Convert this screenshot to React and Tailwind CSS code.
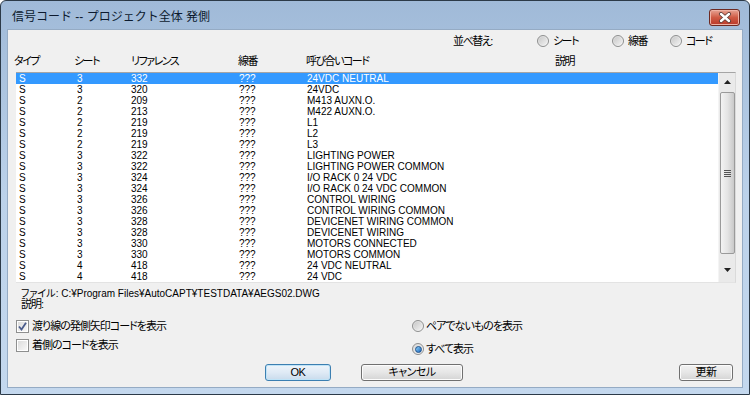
import React from "react";

const rows = [
  ["S", "3", "332", "???", "24VDC NEUTRAL"],
  ["S", "3", "320", "???", "24VDC"],
  ["S", "2", "209", "???", "M413 AUXN.O."],
  ["S", "2", "213", "???", "M422 AUXN.O."],
  ["S", "2", "219", "???", "L1"],
  ["S", "2", "219", "???", "L2"],
  ["S", "2", "219", "???", "L3"],
  ["S", "3", "322", "???", "LIGHTING POWER"],
  ["S", "3", "322", "???", "LIGHTING POWER COMMON"],
  ["S", "3", "324", "???", "I/O RACK 0 24 VDC"],
  ["S", "3", "324", "???", "I/O RACK 0 24 VDC COMMON"],
  ["S", "3", "326", "???", "CONTROL WIRING"],
  ["S", "3", "326", "???", "CONTROL WIRING COMMON"],
  ["S", "3", "328", "???", "DEVICENET WIRING COMMON"],
  ["S", "3", "328", "???", "DEVICENET WIRING"],
  ["S", "3", "330", "???", "MOTORS CONNECTED"],
  ["S", "3", "330", "???", "MOTORS COMMON"],
  ["S", "4", "418", "???", "24 VDC NEUTRAL"],
  ["S", "4", "418", "???", "24 VDC"],
];

function Radio({ checked }) {
  return (
    <span className="w-[12px] h-[12px] shrink-0 rounded-full border border-[#8e8f8f] bg-linear-to-br from-[#d6d6d6] to-[#fafafa] flex items-center justify-center">
      {checked ? (
        <span className="w-[7px] h-[7px] rounded-full border border-[#1c4f8a] bg-linear-to-br from-[#8fd3fb] to-[#1464b8]" />
      ) : (
        <span className="w-[8px] h-[8px] rounded-full bg-linear-to-br from-[#c9c9c9] to-[#f1f1f1]" />
      )}
    </span>
  );
}

function Check({ checked }) {
  return (
    <span className="w-[13px] h-[13px] shrink-0 border border-[#8e8f8f] bg-white flex items-center justify-center">
      <span className="w-[9px] h-[9px] bg-linear-to-br from-[#dcdcdc] to-[#f7f7f7] flex items-center justify-center">
        {checked && (
          <svg width="9" height="9" viewBox="0 0 9 9">
            <path d="M1 4.5 L3.5 7.5 L8 0.8" fill="none" stroke="#4a5c8c" strokeWidth="1.8" />
          </svg>
        )}
      </span>
    </span>
  );
}

const btnBase =
  "h-[17px] shrink-0 rounded-[3px] border flex items-center justify-center text-[11px] tracking-[-0.5px] text-black ";
const btnNormal =
  "border-[#707070] bg-linear-to-b from-[#f2f2f2] via-[#e6e6e6] to-[#d4d4d4] shadow-[inset_0_0_0_1px_#fcfcfc]";
const btnDefault =
  "border-[#3c7fb1] bg-linear-to-b from-[#eef5fb] via-[#dfeaf5] to-[#c9dbec] shadow-[inset_0_0_0_1px_#bfe3f7]";

export default function App() {
  return (
    <div className="w-[750px] h-[395px] font-['Liberation_Sans','Noto_Sans_CJK_JP',sans-serif] [font-feature-settings:'palt'] text-black">
      <div className="w-[750px] h-[395px] rounded-t-[6px] border border-[#2c3a48] bg-linear-to-b from-[#a0bad8] via-[#bcd2ea] to-[#c4d8ee] flex flex-col">
        {/* Title bar */}
        <div className="h-[28px] flex items-center pl-[11px] pr-[9px]">
          <div className="text-[12px] text-[#0c1a2e] pt-[3px] [font-feature-settings:normal]">信号コード -- プロジェクト全体 発側</div>
          <div className="ml-auto mt-[4px] w-[31px] h-[17px] rounded-[3px] border border-[#6e2a22] bg-linear-to-b from-[#e6a394] via-[#cf5a44] to-[#b9382a] flex items-center justify-center shadow-[inset_0_0_0_1px_#efb2a5]">
            <svg width="14" height="11" viewBox="0 0 14 11">
              <path d="M3 2 L11 9 M11 2 L3 9" stroke="#5a3a36" strokeWidth="4" strokeLinecap="round" />
              <path d="M3 2 L11 9 M11 2 L3 9" stroke="#ffffff" strokeWidth="2.4" strokeLinecap="round" />
            </svg>
          </div>
        </div>
        {/* Client area */}
        <div className="mx-[6px] h-[359px] border border-[#95abc4] bg-[#f0f0f0] flex flex-col pl-[8px] pr-[5px] text-[10px]">
          {/* Sort row */}
          <div className="mt-[5px] h-[12px] flex items-center text-[11px] tracking-[-1.5px]">
            <div className="ml-[437px] w-[84px]">並べ替え:</div>
            <div className="w-[75px] flex items-center gap-[4px]"><Radio />シート</div>
            <div className="w-[58px] flex items-center gap-[4px]"><Radio />線番</div>
            <div className="flex items-center gap-[4px]"><Radio />コード</div>
          </div>
          {/* Header */}
          <div className="mt-[8px] h-[12px] flex items-center text-[11px] tracking-[-1.5px] ml-[-2px]">
            <div className="w-[60px]">タイプ</div>
            <div className="w-[57px]">シート</div>
            <div className="w-[107px]">リファレンス</div>
            <div className="w-[68px]">線番</div>
            <div className="w-[249px]">呼び合いコード</div>
            <div>説明</div>
          </div>
          {/* List */}
          <div className="mt-[5px] w-[720px] h-[211px] bg-white border-t border-t-[#a5a5a5] border-r border-r-[#dadada] border-b border-b-[#e3e3e3] flex">
            <div className="flex-1 flex flex-col">
              {rows.map((r, i) => (
                <div
                  key={i}
                  className={
                    "h-[11px] flex items-center pl-[3px] leading-none " +
                    (i === 0 ? "bg-[#3399ff] text-white" : "text-black")
                  }
                >
                  <div className="w-[58px]">{r[0]}</div>
                  <div className="w-[54px]">{r[1]}</div>
                  <div className="w-[108px]">{r[2]}</div>
                  <div className="w-[68px]">{r[3]}</div>
                  <div>{r[4]}</div>
                </div>
              ))}
            </div>
            {/* Scrollbar */}
            <div className="w-[17px] bg-[#eaeaea] flex flex-col items-center border-l border-l-[#f4f4f4]">
              <div className="h-[17px] w-full flex items-center justify-center">
                <svg width="7" height="4" viewBox="0 0 7 4"><path d="M0 4 L3.5 0 L7 4 Z" fill="#222" /></svg>
              </div>
              <div className="mt-[2px] w-[15px] h-[162px] rounded-[2px] border border-[#9a9a9a] bg-linear-to-r from-[#f3f3f3] via-[#e4e4e4] to-[#c9c9c9] flex items-center justify-center">
                <div className="flex flex-col gap-[1px]">
                  <div className="w-[7px] h-[1px] bg-[#555]" />
                  <div className="w-[7px] h-[1px] bg-[#555]" />
                  <div className="w-[7px] h-[1px] bg-[#555]" />
                  <div className="w-[7px] h-[1px] bg-[#555]" />
                </div>
              </div>
              <div className="flex-1 w-full flex items-center justify-center pt-[4px]">
                <svg width="7" height="4" viewBox="0 0 7 4"><path d="M0 0 L7 0 L3.5 4 Z" fill="#222" /></svg>
              </div>
            </div>
          </div>
          {/* File info */}
          <div className="mt-[5px] h-[11px] flex items-center pl-[5px] text-[10px]">ファイル: C:¥Program Files¥AutoCAPT¥TESTDATA¥AEGS02.DWG</div>
          <div className="h-[11px] flex items-center pl-[5px] text-[11px] tracking-[-1px]">説明:</div>
          {/* Options */}
          <div className="mt-[10px] flex items-start text-[11px] tracking-[-1px]">
            <div className="w-[396px] flex flex-col gap-[6px]">
              <div className="h-[13px] flex items-center gap-[3px]"><Check checked />渡り線の発側矢印コードを表示</div>
              <div className="h-[13px] flex items-center gap-[3px]"><Check />着側のコードを表示</div>
            </div>
            <div className="flex flex-col gap-[11px]">
              <div className="h-[12px] flex items-center gap-[2px]"><Radio />ペアでないものを表示</div>
              <div className="h-[12px] flex items-center gap-[2px]"><Radio checked />すべて表示</div>
            </div>
          </div>
          {/* Buttons */}
          <div className="mt-[9px] flex items-center">
            <div className={btnBase + btnDefault + " ml-[249px] w-[66px]"}>OK</div>
            <div className={btnBase + btnNormal + " ml-[30px] w-[102px]"}>キャンセル</div>
            <div className={btnBase + btnNormal + " ml-[216px] w-[54px]"}>更新</div>
          </div>
        </div>
      </div>
    </div>
  );
}
